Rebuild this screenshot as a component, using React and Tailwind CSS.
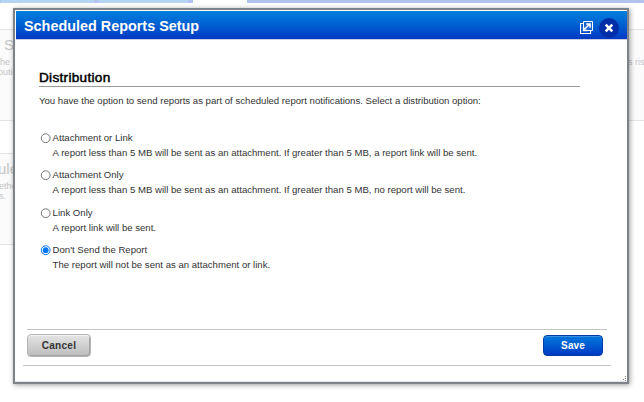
import React from "react";

const options = [
  { label: "Attachment or Link", text: "A report less than 5 MB will be sent as an attachment. If greater than 5 MB, a report link will be sent.", gap: "h-[37px]" },
  { label: "Attachment Only", text: "A report less than 5 MB will be sent as an attachment. If greater than 5 MB, no report will be sent.", gap: "h-[38px]" },
  { label: "Link Only", text: "A report link will be sent.", gap: "h-[37px]" },
  { label: "Don't Send the Report", text: "The report will not be sent as an attachment or link.", gap: "h-[37px]", checked: true },
];

function Radio({ checked }) {
  return (
    <svg className="mt-px block h-[11px] w-[11px] shrink-0" viewBox="0 0 11 11">
      <circle cx="5.7" cy="5.2" r="4.4" fill="#fff" stroke={checked ? "#0075ff" : "#767676"} strokeWidth="1" />
      {checked && <circle cx="5.7" cy="5.2" r="2.9" fill="#0075ff" />}
    </svg>
  );
}

function Backdrop() {
  return (
    <div className="flex h-[402px] flex-col overflow-hidden text-[#c4c4c4]">
      <div className="flex h-[3px] shrink-0">
        <div className="w-px bg-[#b3c3ef]" />
        <div className="w-[93px] bg-[#b3d4f3]" />
        <div className="w-[5px] bg-[#b3c3ef]" />
        <div className="w-[89px] bg-[#b3d4f3]" />
        <div className="w-[5px] bg-[#b3c3ef]" />
        <div className="w-[54px] bg-white" />
        <div className="flex-1 bg-[#b3c3ef]" />
      </div>
      <div className="mt-[26px] flex h-[92px] shrink-0 justify-between border-y border-[#e4e4e4] bg-[#fbfbfb]">
        <div className="pt-[6px]">
          <div className="pl-1 text-[15px] leading-[18px]">S</div>
          <div className="mt-[3px] text-[9px] leading-[10px]">he<br /><span className="-ml-[2px]">butio</span></div>
        </div>
        <div className="w-[16px] whitespace-nowrap pt-[27px] text-[9px] leading-[10px] text-[#c6c2cc]">s ris</div>
      </div>
      <div className="mt-[32px] h-[92px] w-[300px] shrink-0 border-y border-[#e4e4e4] bg-[#fbfbfb] pt-[6px]">
        <div className="-ml-[2px] text-[15px] leading-[18px]">ule</div>
        <div className="-ml-px mt-[3px] text-[9px] leading-[10px]">etho<br />s.</div>
      </div>
    </div>
  );
}

export default function App() {
  return (
    <div className="relative h-[402px] w-[644px] overflow-hidden bg-white font-['Liberation_Sans',Arial,sans-serif]">
      <Backdrop />
      <div className="absolute left-[13px] top-[8px] flex h-[376px] w-[616px] flex-col border-2 border-[#7c8288] bg-white shadow-[1px_1px_5px_rgba(0,0,0,0.4)]">
        <div className="ml-px mt-px flex h-[29px] shrink-0 items-start border-b border-[#c9cfe0] bg-linear-to-b from-[#0080dd] to-[#0038c4] pl-2 pr-2">
          <h1 className="mt-[6px] flex-1 whitespace-nowrap text-[14.4px] font-bold leading-[18px] text-white">Scheduled Reports Setup</h1>
          <svg className="mr-[6px] mt-[10px] block h-[13px] w-[13px]" viewBox="0 0 13 13" fill="none" stroke="#fff">
            <path d="M3.5 .5h9v9h-9z" fill="#1a66d0" />
            <path d="M3 2.5H.5v10h10V10" strokeWidth="1.2" />
            <path d="M3.8 9L10 2.8M6.2 2.9h3.9v3.9M3.6 5.8v3.6h3.6" strokeWidth="1.5" />
          </svg>
          <svg className="mt-[7px] block h-5 w-5" viewBox="0 0 20 20">
            <circle cx="10" cy="10" r="10" fill="#002ea8" />
            <path d="M6.7 6.7l6.6 6.6M13.3 6.7l-6.6 6.6" stroke="#fff" strokeWidth="2.6" />
          </svg>
        </div>
        <div className="flex h-[289px] shrink-0 flex-col pl-6 pr-[47px] text-[9.6px] leading-[12px] text-[#333]">
          <h2 className="mt-[30px] h-[17px] w-[541px] whitespace-nowrap border-b border-[#999] text-[13.6px] font-normal leading-[16px] tracking-[0.3px] text-black [-webkit-text-stroke:0.5px_#000]">Distribution</h2>
          <p className="mt-[8px] h-[12px] whitespace-nowrap">You have the option to send reports as part of scheduled report notifications. Select a distribution option:</p>
          <div className="mt-[25px] flex flex-col pl-px">
            {options.map((o) => (
              <label key={o.label} className={"flex gap-[1.6px] " + o.gap}>
                <Radio checked={o.checked} />
                <span className="flex flex-col gap-[3px] whitespace-nowrap">
                  <span>{o.label}</span>
                  <span>{o.text}</span>
                </span>
              </label>
            ))}
          </div>
        </div>
        <div className="ml-3 mr-5 flex h-[30px] shrink-0 justify-between border-t border-[#c4c4c4]">
          <button className="mt-[4px] h-[23px] w-[64px] rounded-[4px] border border-[#b4b4b4] bg-linear-to-b from-[#e4e4e4] to-[#bdbdbd] text-[10px] font-bold tracking-[0.3px] text-[#333] shadow-[inset_0_1px_0_#f2f2f2,inset_-1px_-1px_0_#a4a4a4]">Cancel</button>
          <button className="mr-1 mt-[5px] h-[21px] w-[60px] rounded-[4px] border border-[#0038a8] bg-linear-to-b from-[#0078dc] to-[#0038c4] text-[10px] font-bold tracking-[0.1px] text-white shadow-[inset_0_1px_0_#3c90e4]">Save</button>
        </div>
        <div className="ml-2 mr-4 mt-[6px] h-px shrink-0 bg-[#c4c4c4]" />
        <div className="flex flex-1 items-end justify-end border-b border-[#dfe3ea]">
          <svg className="block h-[5px] w-[5px]" viewBox="0 0 5 5" fill="#888">
            <path d="M3 0h1v1h-1zM3 2h1v1h-1zM1 3h1v1h-1zM3 4h1v1h-1z" />
          </svg>
        </div>
      </div>
    </div>
  );
}
